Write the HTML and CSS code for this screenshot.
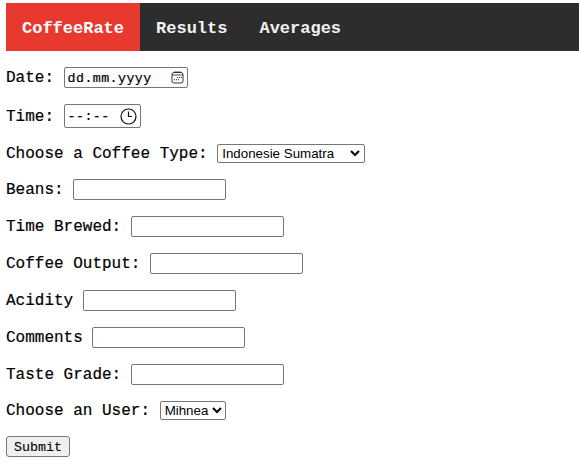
FILE: index.html
```html
<!DOCTYPE html>
<html lang="en">
<head>
<meta charset="utf-8">
<title>CoffeeRate</title>
<link rel="stylesheet" href="styles.css">
</head>
<body>
<nav class="nav"><a class="active">CoffeeRate</a><a>Results</a><a>Averages</a></nav>
<form class="form">
<div class="row"><span class="label">Date:</span><span class="field date-field"><span class="value">dd.mm.yyyy</span>
<svg width="13" height="13" viewBox="0 0 13 13" fill="none" stroke="#222"><rect x="1" y="1.5" width="11" height="10.5" rx="2" stroke-width=".9"/><path d="M3 1h7M1 4h11" stroke-width=".8"/><path d="M5.8 6.5h1M7.8 6.5h1M9.8 6.5h1M3 8.7h1M5 8.7h1M7 8.7h1"/></svg></span></div>
<div class="row time"><span class="label">Time:</span><span class="field time-field"><span class="value">--:--</span>
<svg width="17" height="17" viewBox="0 0 17 17" fill="none" stroke="#111" stroke-width="1.2"><circle cx="8.5" cy="8.5" r="7.5"/><path d="M8.5 3.5v5h3.5"/></svg></span></div>
<div class="row short"><span class="label">Choose a Coffee Type:</span><span class="field select type-select"><span>Indonesie Sumatra</span><svg width="10" height="7" viewBox="0 0 10 7" fill="none" stroke="#000" stroke-width="2"><path d="M1 1l4 4 4-4"/></svg></span></div>
<div class="row"><label class="label" for="beans">Beans:</label><input id="beans" class="field text"></div>
<div class="row"><label class="label" for="brewed">Time Brewed:</label><input id="brewed" class="field text"></div>
<div class="row"><label class="label" for="output">Coffee Output:</label><input id="output" class="field text"></div>
<div class="row"><label class="label" for="acidity">Acidity</label><input id="acidity" class="field text"></div>
<div class="row"><label class="label" for="comments">Comments</label><input id="comments" class="field text"></div>
<div class="row"><label class="label" for="taste">Taste Grade:</label><input id="taste" class="field text"></div>
<div class="row short"><span class="label">Choose an User:</span><span class="field select user-select"><span>Mihnea</span><svg width="10" height="7" viewBox="0 0 10 7" fill="none" stroke="#000" stroke-width="2"><path d="M1 1l4 4 4-4"/></svg></span></div>
<button class="submit" type="button">Submit</button>
</form>
</body>
</html>
```
FILE: styles.css
```css
* { box-sizing: border-box; }
body { margin: 0; padding: 3px 0 0 6px; background: #fff; color: #000; font: 16px/20px "Courier New", "Liberation Mono", monospace; -webkit-text-stroke: 0.2px; overflow: hidden; }
.nav { display: flex; height: 48px; background: #2d2d2d; color: #f2f2f2; font-size: 17px; font-weight: bold; -webkit-text-stroke: 0; }
.nav a { padding: 16px 16px 0; }
.nav .active { background: #e8392f; color: #fff; }
.form { display: flex; flex-direction: column; align-items: flex-start; gap: 16px; padding-top: 16px; }
.row { display: flex; align-items: center; gap: 9.6px; height: 21px; white-space: nowrap; }
.time { height: 24px; }
.short { height: 19px; }
.label { padding-top: 1px; }
.field { display: flex; align-items: center; justify-content: space-between; height: 100%; border: 1px solid #767676; border-radius: 2px; background: #fff; }
.text { width: 153px; padding: 0; }
.date-field, .time-field { padding: 0 3px; font-size: 13.33px; letter-spacing: 0.4px; }
.value { padding-top: 2px; }
.date-field { width: 124px; }
.time-field { width: 77px; padding-right: 2.5px; }
.select { padding: 0 4px; font: 13.33px "Liberation Sans", sans-serif; -webkit-text-stroke: 0; }
.type-select { width: 148px; }
.user-select { width: 66px; padding: 0 3px 0 4px; }
.submit { width: 64px; height: 21px; padding: 1px 0 0; border: 1px solid #767676; border-radius: 3px; background: #efefef; color: #000; font: 13.33px "Courier New", "Liberation Mono", monospace; -webkit-text-stroke: 0.1px; }
```
